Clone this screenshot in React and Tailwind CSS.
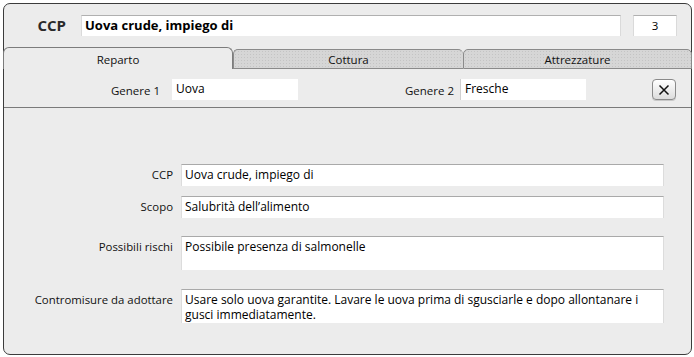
import React from "react";

const font = { fontFamily: '"Open Sans", "Noto Sans", sans-serif' };

function Field({ label, value, h, mt }) {
  return (
    <div className={`flex items-start ${mt}`}>
      <div className="w-[169px] text-right text-[11.4px] text-[#111] pt-[4px] leading-[14px]">{label}</div>
      <div
        className={`ml-[8px] w-[483px] ${h} bg-white border-t border-t-[#a9a9a9] border-x border-x-[#dcdcdc] px-[3px] pt-[2px] text-[12px] leading-[15px] text-black`}
      >
        {value}
      </div>
    </div>
  );
}

export default function App() {
  return (
    <div className="w-[694px] h-[357px] bg-white pt-[3px] pl-[3px]" style={font}>
      <div className="w-[689px] h-[352px] border border-[#3c3c3c] rounded-[7px] bg-[#ececec] flex flex-col">
        {/* Header */}
        <div className="flex items-center mt-[11px] h-[21px]">
          <div className="w-[77px] text-right pr-[15px] text-[15px] font-bold text-[#2a2a2a] leading-none">CCP</div>
          <div className="w-[540px] h-[21px] bg-white border-t border-t-[#b0b0b0] border-x border-x-[#dadada] px-[3px] text-[13px] font-bold leading-[19px] text-black">
            Uova crude, impiego di
          </div>
          <div className="ml-[12px] w-[44px] h-[21px] bg-white border-t border-t-[#b0b0b0] border-x border-x-[#dadada] text-center text-[11.5px] leading-[19px] text-black">
            3
          </div>
        </div>

        {/* Tabs */}
        <div className="flex -mx-px mt-[11px] h-[22px] items-end">
          <div className="w-[230px] h-[22px] pt-[2px] border-t border-x border-[#7c7c7c] rounded-t-[6px] bg-[#ececec] flex items-center justify-center text-[11.5px] text-[#111]">
            Reparto
          </div>
          <div className="w-[230px] h-[20px] pt-[1px] border-t border-l border-b border-[#8a8a8a] rounded-t-[5px] bg-[#d6d6d6] bg-[radial-gradient(#c4c4c4_0.6px,transparent_0.7px)] bg-[length:3px_3px] flex items-center justify-center text-[11.5px] text-[#111]">
            Cottura
          </div>
          <div className="flex-1 h-[20px] pt-[1px] border-t border-x border-b border-[#8a8a8a] rounded-t-[5px] bg-[#d6d6d6] bg-[radial-gradient(#c4c4c4_0.6px,transparent_0.7px)] bg-[length:3px_3px] flex items-center justify-center text-[11.5px] text-[#111]">
            Attrezzature
          </div>
        </div>

        {/* Genere row */}
        <div className="flex items-center mt-[10px] h-[21px]">
          <div className="w-[156px] text-right text-[11.5px] text-[#111] pt-[2px]">Genere 1</div>
          <div className="ml-[12px] w-[126px] h-[21px] bg-white px-[4px] text-[12px] leading-[20px] text-black">Uova</div>
          <div className="w-[156px] text-right text-[11.5px] text-[#111] pt-[2px]">Genere 2</div>
          <div className="ml-[6px] w-[126px] h-[21px] bg-white border-l border-l-[#d0d0d0] px-[4px] text-[12px] leading-[20px] text-black">Fresche</div>
          <div className="ml-[66px] w-[24px] h-[21px] rounded-[4px] border border-[#8a8a8a] bg-[linear-gradient(#ffffff,#dcdcdc)] flex items-center justify-center shadow-[0_1px_0_#c8c8c8]">
            <svg width="12" height="12" viewBox="0 0 12 12">
              <path d="M1.5 1.5 L10.5 10.5 M10.5 1.5 L1.5 10.5" stroke="#111" strokeWidth="1.5" />
            </svg>
          </div>
        </div>

        <div className="mt-[7px] h-px bg-[#7a7a7a]" />

        {/* Fields */}
        <div className="mt-[56px] flex flex-col">
          <Field label="CCP" value="Uova crude, impiego di" h="h-[22px]" mt="" />
          <Field label="Scopo" value="Salubrità dell’alimento" h="h-[22px]" mt="mt-[10px]" />
          <Field label="Possibili rischi" value="Possibile presenza di salmonelle" h="h-[34px]" mt="mt-[18px]" />
          <Field
            label="Contromisure da adottare"
            value="Usare solo uova garantite. Lavare le uova prima di sgusciarle e dopo allontanare i gusci immediatamente."
            h="h-[34px]"
            mt="mt-[19px]"
          />
        </div>
      </div>
    </div>
  );
}
